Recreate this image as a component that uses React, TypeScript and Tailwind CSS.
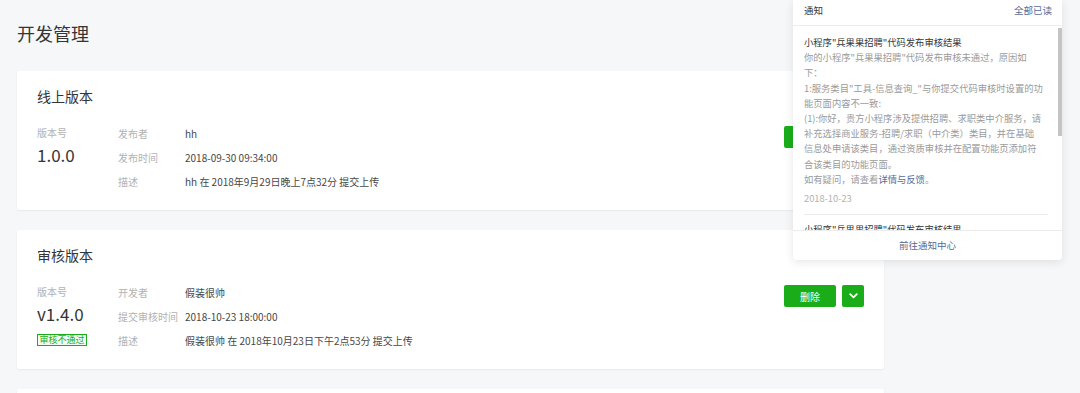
import React from "react";

type Row = { label: string; value: string };

function Chevron() {
  return (
    <svg width="9" height="6" viewBox="0 0 9 6" fill="none">
      <polyline points="1.2,1.2 4.5,4.4 7.8,1.2" stroke="#ffffff" strokeWidth="1.8" strokeLinecap="round" strokeLinejoin="round" />
    </svg>
  );
}

function Card({ title, version, rows, tag, btn }: { title: string; version: string; rows: Row[]; tag?: string; btn: string }) {
  return (
    <div className="bg-white rounded-[2px] shadow-[0_1px_2px_rgba(0,0,0,0.06)] px-[20px] pt-[15px] pb-[17px]">
      <div className="text-[14px] leading-[20px] text-[#353535]">{title}</div>
      <div className="flex mt-[15px]">
        <div className="w-[81px] shrink-0">
          <div className="text-[10px] leading-[24px] text-[#b2b2b2]">版本号</div>
          <div className="text-[17px] leading-[20px] text-[#353535]">{version}</div>
          {tag && (
            <div className="mt-[3px] inline-block border border-[#1aad19] bg-[#f3fcf3] text-[#1aad19] text-[9px] leading-[10px] px-[1.5px]">
              {tag}
            </div>
          )}
        </div>
        <div className="flex-1 flex flex-col">
          {rows.map((r) => (
            <div key={r.label} className="flex items-center h-[24px] text-[10px]">
              <div className="w-[67px] shrink-0 text-[#b2b2b2]">{r.label}</div>
              <div className="text-[#474747]">{r.value}</div>
            </div>
          ))}
        </div>
        <div className="flex gap-[6px] mt-[5px] self-start">
          <button className="w-[52px] h-[22px] bg-[#1aad19] text-white text-[10px] rounded-[2px] flex items-center justify-center">
            {btn}
          </button>
          <button className="w-[22px] h-[22px] bg-[#1aad19] rounded-[2px] flex items-center justify-center">
            <Chevron />
          </button>
        </div>
      </div>
    </div>
  );
}

function NotificationPanel() {
  const lines = [
    "你的小程序\"兵果果招聘\"代码发布审核未通过，原因如",
    "下：",
    "1:服务类目\"工具-信息查询_\"与你提交代码审核时设置的功",
    "能页面内容不一致:",
    "(1):你好，贵方小程序涉及提供招聘、求职类中介服务，请",
    "补充选择商业服务-招聘/求职（中介类）类目，并在基础",
    "信息处申请该类目，通过资质审核并在配置功能页添加符",
    "合该类目的功能页面。",
  ];
  return (
    <div className="absolute left-[793px] top-0 w-[269px] h-[260px] bg-white rounded-b-[4px] shadow-[0_2px_10px_rgba(0,0,0,0.10)] flex flex-col">
      <div className="h-[26px] shrink-0 flex items-center justify-between pl-[11px] pr-[10px] pb-[4px] border-b border-[#ececec] text-[9.5px]">
        <span className="text-[#353535]">通知</span>
        <span className="text-[#576b95]">全部已读</span>
      </div>
      <div className="relative h-[204px] shrink-0 overflow-hidden">
        <div className="pl-[11px] pr-[14px] pt-[9px]">
          <div className="text-[9.3px] leading-[15.2px] whitespace-nowrap">
            <div className="text-[#353535]">小程序"兵果果招聘"代码发布审核结果</div>
            {lines.map((l) => (
              <div key={l} className="text-[#9a9a9a]">{l}</div>
            ))}
            <div className="text-[#9a9a9a]">
              如有疑问，请查看<span className="text-[#576b95]">详情与反馈</span>。
            </div>
            <div className="mt-[4px] text-[#b2b2b2]">2018-10-23</div>
          </div>
          <div className="mt-[8px] border-t border-[#ececec]" />
          <div className="pt-[7px] text-[9.3px] leading-[15.2px] whitespace-nowrap text-[#353535]">
            小程序"兵果果招聘"代码发布审核结果
          </div>
        </div>
        <div className="absolute right-0 top-[2px] w-[4px] h-[108px] bg-[#c4c4c4]" />
      </div>
      <div className="flex-1 border-t border-[#ececec] flex items-center justify-center text-[9.5px] text-[#576b95]">
        前往通知中心
      </div>
    </div>
  );
}

export default function App() {
  return (
    <div className="relative w-[1080px] h-[393px] overflow-hidden bg-[#f6f7f9] font-['Noto_Sans_CJK_SC',sans-serif] text-[#353535]">
      <div className="pl-[17px] w-[884px]">
        <h1 className="h-[71px] pt-[21px] text-[18px] leading-[24px] font-normal text-[#353535]">开发管理</h1>
        <div className="flex flex-col gap-[20px]">
          <Card
            title="线上版本"
            version="1.0.0"
            btn="回退"
            rows={[
              { label: "发布者", value: "hh" },
              { label: "发布时间", value: "2018-09-30 09:34:00" },
              { label: "描述", value: "hh 在 2018年9月29日晚上7点32分 提交上传" },
            ]}
          />
          <Card
            title="审核版本"
            version="v1.4.0"
            tag="审核不通过"
            btn="删除"
            rows={[
              { label: "开发者", value: "假装很帅" },
              { label: "提交审核时间", value: "2018-10-23 18:00:00" },
              { label: "描述", value: "假装很帅 在 2018年10月23日下午2点53分 提交上传" },
            ]}
          />
          <div className="h-[139px] bg-white rounded-[2px] shadow-[0_1px_2px_rgba(0,0,0,0.06)]" />
        </div>
      </div>
      <NotificationPanel />
    </div>
  );
}
